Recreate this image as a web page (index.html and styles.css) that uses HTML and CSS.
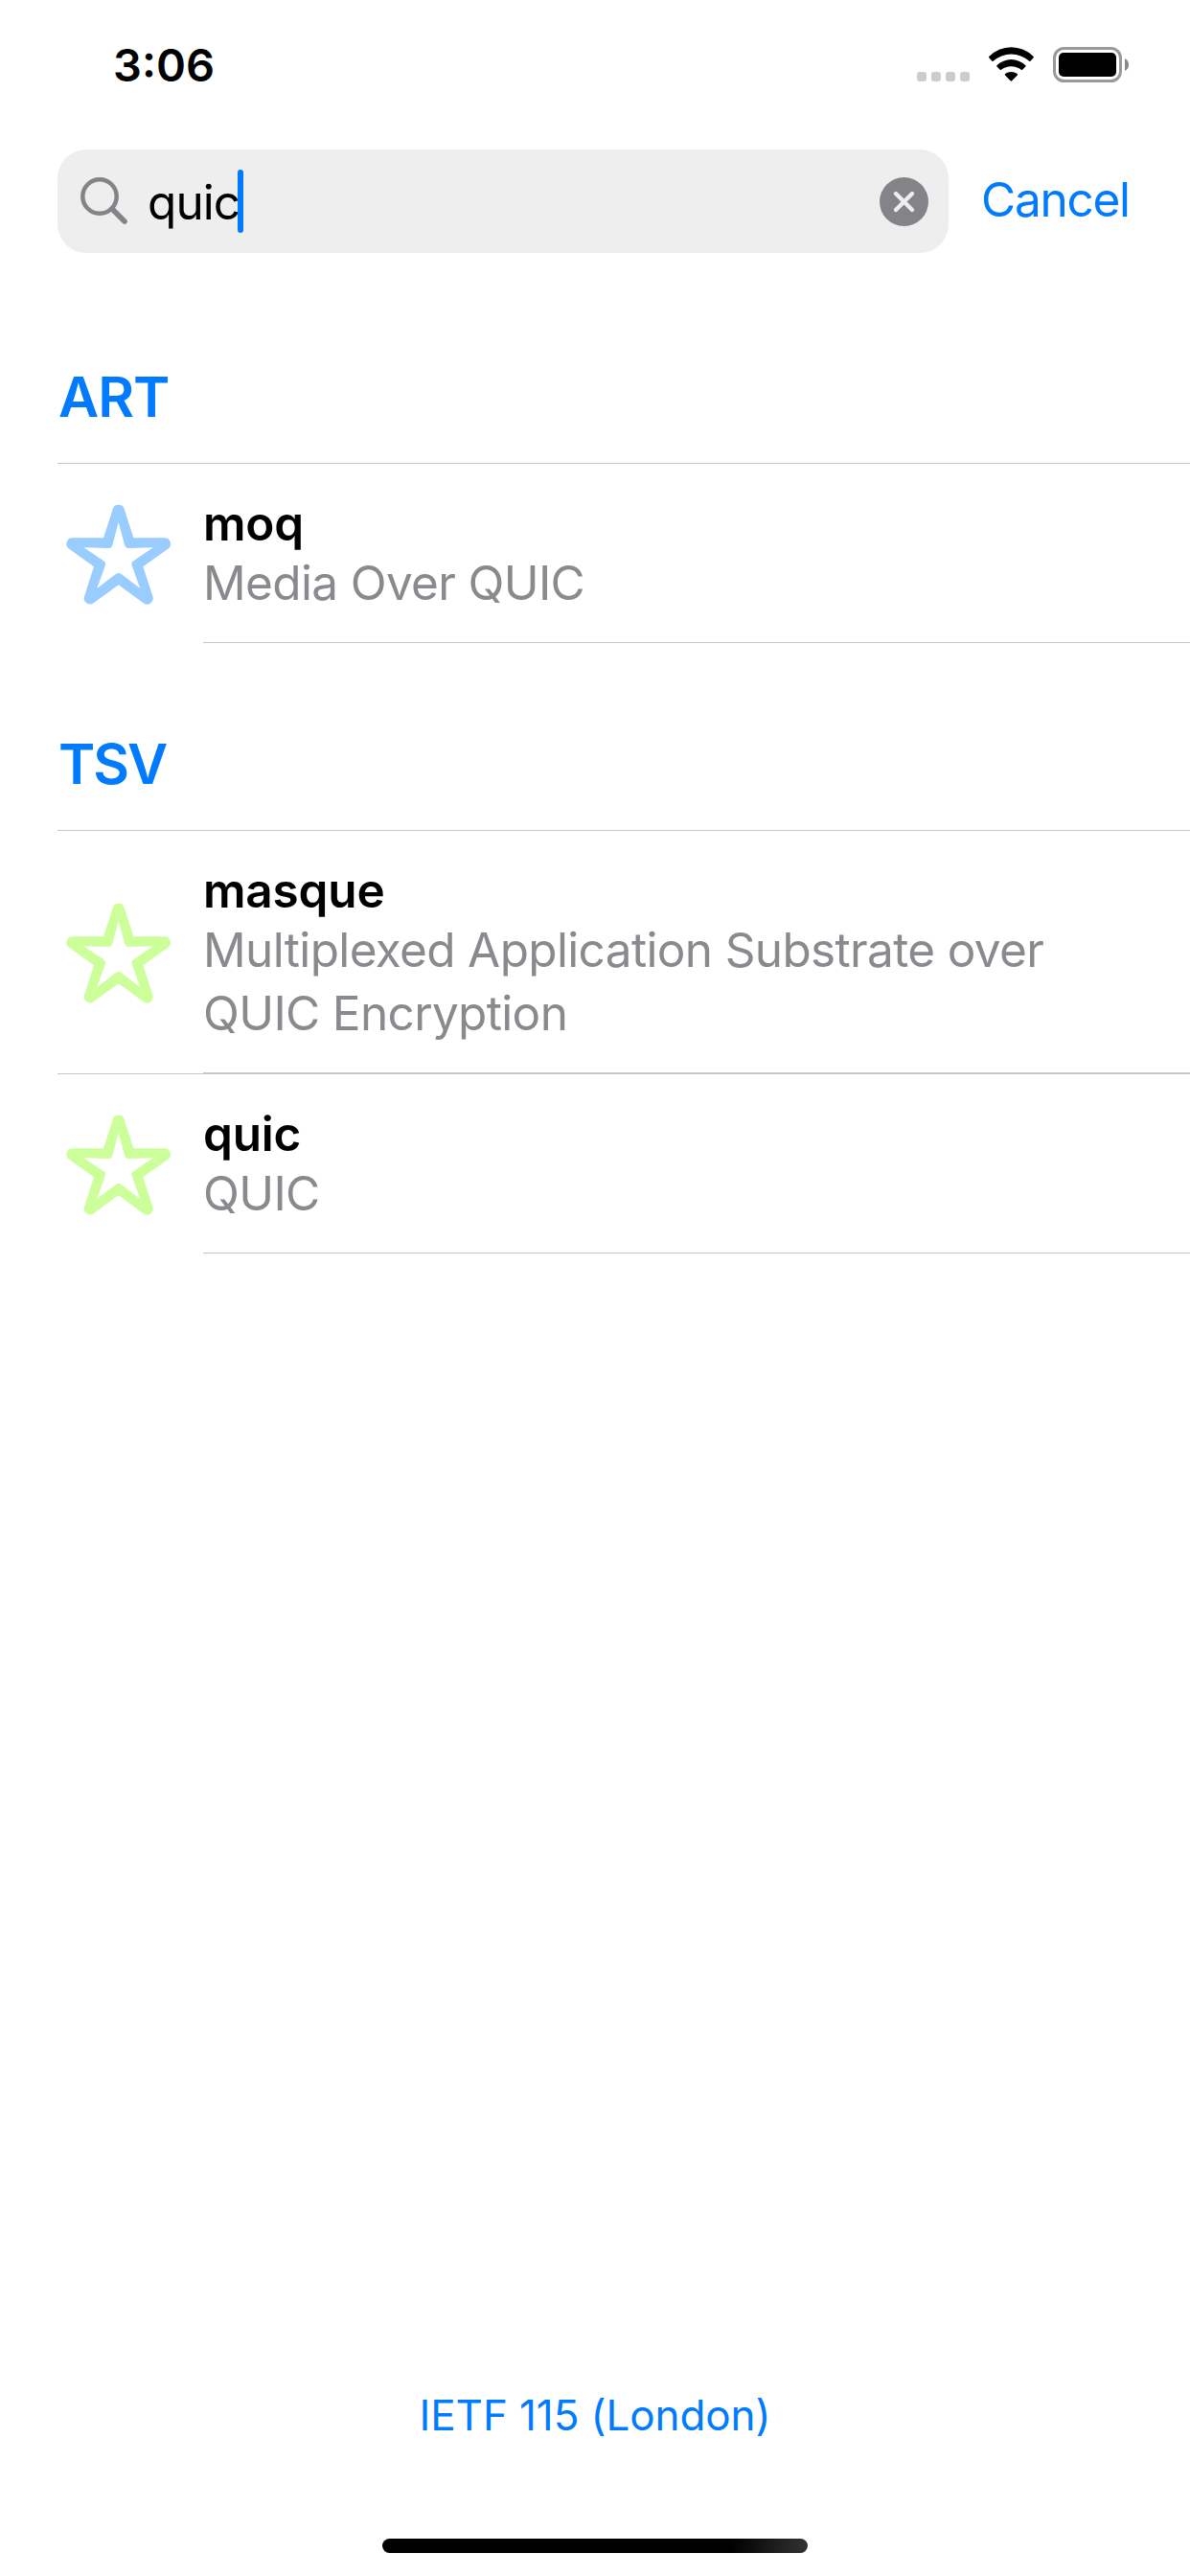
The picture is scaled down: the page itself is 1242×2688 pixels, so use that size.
FILE: index.html
```html
<!DOCTYPE html>
<html lang="en">
<head>
<meta charset="utf-8">
<title>Working groups</title>
<link rel="stylesheet" href="styles.css">
</head>
<body>
<svg width="0" height="0" class="defs">
  <symbol id="star" viewBox="10 11 128 112">
    <path fill-rule="evenodd" d="M58 50.3L67.5 21A6.3 6.3 0 0 1 79.9 21L89.4 50.3L121 50.3A6.3 6.3 0 0 1 124.9 62L99.3 80.3L109.3 111A6.3 6.3 0 0 1 99.3 118L73.7 99.3L48 118A6.3 6.3 0 0 1 38.1 111L48 80.3L22.5 62A6.3 6.3 0 0 1 26.4 50.3Z
    M73.7 34L67.3 58Q66.3 61 63.5 61L37.5 60.3L58.5 74.6Q60.8 76.3 59.8 79L51.3 103L71.2 87.8Q73.7 86 76.2 87.8L96.2 103L87.6 79Q86.6 76.3 88.9 74.6L110 60.3L84 61Q81.2 61 80.2 58Z"/>
  </symbol>
</svg>
<div class="screen">
  <header class="status">
    <span class="time">3:06</span>
    <div class="dots"><i></i><i></i><i></i><i></i></div>
    <svg class="wifi" viewBox="150 28 51 38" width="51" height="38">
      <path d="M152.3 38.9A32.5 32.5 0 0 1 198.6 38.9Q199.3 39.6 198.6 40.3L195.4 43.8Q194.8 44.4 194.2 43.8A28 28 0 0 0 156.6 43.8Q156 44.4 155.4 43.8L152.3 40.3Q151.6 39.6 152.3 38.9Z"/>
      <path d="M160.6 48A21.5 21.5 0 0 1 190.2 48Q191 48.7 190.3 49.4L187.1 52.8Q186.6 53.4 185.9 52.8A17 17 0 0 0 164.9 52.8Q164.2 53.4 163.7 52.8L160.5 49.4Q159.8 48.7 160.6 48Z"/>
      <path d="M169 57.1A10.5 10.5 0 0 1 181.8 57.1Q182.5 57.7 181.8 58.4L176.2 64.3Q175.4 65 174.6 64.3L169 58.4Q168.3 57.7 169 57.1Z"/>
    </svg>
    <svg class="battery" viewBox="0 0 80 37" width="80" height="37">
      <rect x="1.5" y="1.5" width="69" height="34" rx="10" fill="none" stroke="#999" stroke-width="3"/>
      <rect x="6" y="6" width="60" height="25" rx="5"/>
      <path d="M75 12Q79 14 79 18.5T75 25Z" fill="#888"/>
    </svg>
  </header>
  <div class="search">
    <div class="field">
      <svg class="glass" viewBox="0 0 50 50" width="50" height="50" fill="none" stroke="#848388">
        <circle cx="20" cy="20" r="17.7" stroke-width="4.5"/>
        <path d="M33 33L46 46" stroke-width="5.6" stroke-linecap="round"/>
      </svg>
      <span class="query">quic</span><span class="caret"></span>
      <svg class="clear" viewBox="0 0 51 51" width="51" height="51">
        <circle cx="25.5" cy="25.5" r="25.5" fill="#848388"/>
        <path d="M17 17L34 34M34 17L17 34" stroke="#eee" stroke-width="4.4" stroke-linecap="round"/>
      </svg>
    </div>
    <span class="cancel">Cancel</span>
  </div>
  <main>
    <h2 class="first">ART</h2>
    <section class="row blue">
      <svg class="star"><use href="#star"/></svg>
      <div class="text"><h3>moq</h3><p>Media Over QUIC</p></div>
    </section>
    <h2 class="tight">TSV</h2>
    <section class="row green">
      <svg class="star"><use href="#star"/></svg>
      <div class="text"><h3>masque</h3><p>Multiplexed Application Substrate over<br>QUIC Encryption</p></div>
    </section>
    <section class="row green">
      <svg class="star"><use href="#star"/></svg>
      <div class="text"><h3>quic</h3><p>QUIC</p></div>
    </section>
  </main>
  <footer>
    <span class="meeting">IETF 115 (London)</span>
    <div class="home"></div>
  </footer>
</div>
</body>
</html>
```
FILE: styles.css
```css
* { box-sizing: border-box; margin: 0; padding: 0; }
body { background: #fff; font-family: Inter, "Liberation Sans", sans-serif; color: #000; }
.defs { display: block; }
.screen { width: 1242px; height: 2688px; display: flex; flex-direction: column; overflow: hidden; }
.status { display: flex; align-items: flex-start; height: 156px; padding: 49px 63px 0 118px; flex: none; }
.time { font-size: 47px; font-weight: 600; line-height: 38px; }
.dots { display: flex; gap: 5px; margin: 26px 18px 0 auto; }
.dots i { width: 10px; height: 10px; border-radius: 3px; background: #ccc; }
.wifi { margin: -1px 18px 0 0; }
.search { display: flex; height: 108px; padding-left: 60px; flex: none; }
.field { width: 930px; display: flex; align-items: center; background: #eee; border-radius: 30px; padding: 0 21px 0 24px; }
.query { font-size: 49.5px; letter-spacing: -0.9px; line-height: 60px; margin: 2px 0 0 20px; width: 94px; }
.caret { width: 6px; height: 66px; border-radius: 3px; background: #007aff; }
.clear { margin-left: auto; }
.cancel { margin-left: 34px; font-size: 49.5px; letter-spacing: -1.25px; line-height: 104px; color: #007aff; }
h2 { font-size: 58px; line-height: 70px; font-weight: 600; letter-spacing: -1px; color: #007aff; padding: 91px 0 34px 61px; }
h2.first { padding-top: 115px; }
h2.tight { letter-spacing: -2px; }
.row { display: flex; align-items: center; margin-left: 60px; border-top: 1px solid #c6c6c8; }
.star { width: 128px; height: 112px; margin-right: 24px; flex: none; }
.blue .star { fill: #99ccff; }
.green .star { fill: #ccff99; }
.text { flex: 1; padding: 34px 0 29px; border-bottom: 1px solid #c6c6c8; }
h3 { font-size: 49.5px; line-height: 57px; font-weight: 600; letter-spacing: -0.2px; }
p { font-size: 49.5px; line-height: 66px; letter-spacing: -0.65px; color: #8a8a8e; }
footer { margin-top: auto; display: flex; flex-direction: column; align-items: center; }
.meeting { font-size: 44px; line-height: 60px; letter-spacing: -0.1px; color: #007aff; }
.home { width: 444px; height: 15px; margin: 99px 0 24px; border-radius: 8px; background: linear-gradient(90deg, #000 82%, #333); }
```
